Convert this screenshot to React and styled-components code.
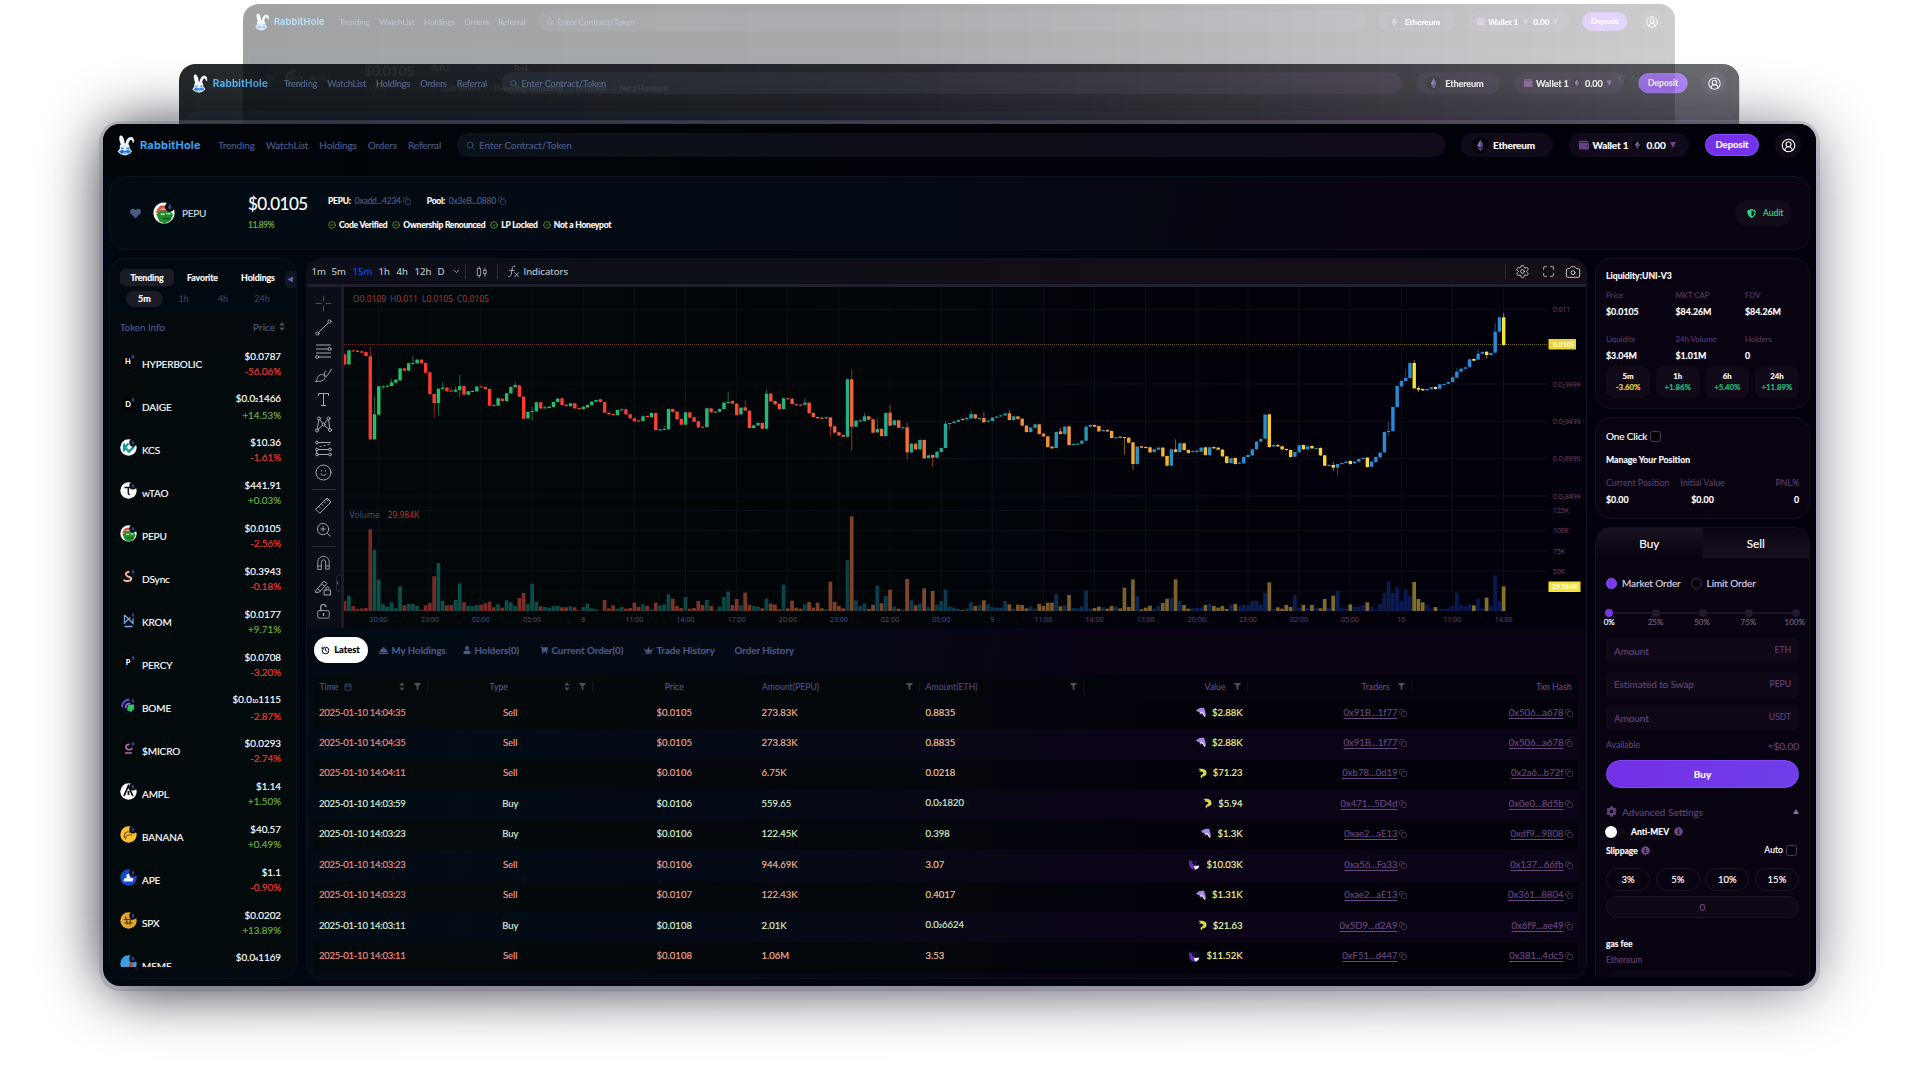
import React from "react";
import styled, { createGlobalStyle, css } from "styled-components";
import { FaHeart, FaFilter, FaCog, FaInfoCircle, FaShieldAlt, FaCrown, FaShoppingCart, FaUser, FaWallet, FaConciergeBell } from "react-icons/fa";
import { Copy, Search, CircleUserRound, CircleCheck, ChevronDown, Calendar, Settings, Maximize, Camera, History } from "lucide-react";

const Global = createGlobalStyle`
  * { box-sizing: border-box; }
  html, body { margin: 0; padding: 0; background: #fff; }
  body {
    height: 1071px;
    overflow: hidden;
    font-family: Lato, "Liberation Sans", sans-serif;
    font-size: 10px;
    line-height: 12px;
    color: #fff;
    -webkit-text-stroke: 0.15px;
  }
  svg { display: block; flex: none; }
`;

const blueInk = "#4a5a88";
const plumInk = "#68467f";

/* ---------- stage and stacked windows ---------- */

const Stage = styled.div`
  position: relative;
  width: 1920px;
  height: 1071px;
  padding: 124px 104px 0 103px;
  overflow: hidden;
`;

const Glow = styled.div`
  position: absolute;
  left: 103px;
  top: 126px;
  width: 1713px;
  height: 864px;
  border-radius: 30px;
  background: linear-gradient(90deg, rgba(8, 5, 22, 0.88), rgba(10, 6, 28, 0.76) 50%, rgba(16, 10, 36, 0.56));
  filter: blur(30px);
`;

const Ghost = styled.div`
  position: absolute;
  left: ${(p) => p.$x}px;
  top: ${(p) => p.$y}px;
  width: 1713px;
  height: ${(p) => p.$h}px;
  overflow: hidden;
  border-radius: 18px 18px 0 0;
  background: linear-gradient(90deg, #00070c, #04000d);
  transform: scale(${(p) => p.$scale});
  transform-origin: 0 0;
  mask-image: linear-gradient(90deg, ${(p) => p.$fade});
`;

const Window = styled.main`
  position: relative;
  display: flex;
  flex-direction: column;
  width: 1713px;
  height: 862px;
  border-radius: 17px;
  overflow: hidden;
  background: linear-gradient(100deg, #00080f 0%, #010510 50%, #03000e 75%);
`;

const Rim = styled.div`
  position: relative;
  width: 1713px;
  height: 862px;
  border-radius: 17px;
  box-shadow: 0 0 0 4px rgba(232, 230, 245, 0.13), 0 1px 0 4px rgba(60, 55, 80, 0.22);
`;

/* ---------- header ---------- */

const HeaderBar = styled.header`
  display: flex;
  align-items: center;
  flex: none;
  height: 52px;
  padding: 0 15px 10px 14px;
  background: linear-gradient(90deg, #000508, #02000a);
`;

const Brand = styled.div`
  display: flex;
  align-items: center;
  width: 101px;
  gap: 5px;
  font: 600 11px/14px Inter, sans-serif;
  letter-spacing: 0.25px;
  color: #3fa9f6;
`;

const Nav = styled.nav`
  display: flex;
  width: 239px;
  gap: 11px;
  color: ${blueInk};
  letter-spacing: -0.15px;
`;

const SearchBox = styled.div`
  display: flex;
  align-items: center;
  gap: 4px;
  width: 988px;
  height: 24px;
  padding-left: 9px;
  border-radius: 12px;
  color: ${blueInk};
  letter-spacing: -0.1px;
  background: linear-gradient(90deg, #0a1118, #0e0e18 50%, #130b1b);
`;

const Pill = styled.div`
  display: flex;
  align-items: center;
  gap: ${(p) => p.$gap}px;
  width: ${(p) => p.$w}px;
  height: 24px;
  margin-left: 16px;
  padding-left: ${(p) => p.$pad}px;
  border-radius: 12px;
  background: #110a1a;
  font-weight: 700;
  letter-spacing: -0.15px;
  white-space: nowrap;
`;

const EthDisc = styled.span`
  display: flex;
  align-items: center;
  justify-content: center;
  width: ${(p) => p.$d}px;
  height: ${(p) => p.$d}px;
  border-radius: 50%;
  background: #020106;
`;

const Caret = styled.span`
  width: 0;
  height: 0;
  border: 3px solid transparent;
  ${(p) => (p.$up ? css`border-bottom: 5px solid #8a6aa5; border-top: 0;` : css`border-top: 6px solid #6b478a; border-bottom: 0;`)}
`;

const Deposit = styled.button`
  width: 54px;
  height: 22px;
  margin-left: 16px;
  padding: 0;
  border: 1px solid #8a4bff;
  border-radius: 11px;
  background: #7433ea;
  color: #fff;
  font: 700 9.5px/12px Lato, sans-serif;
`;

const Avatar = styled.div`
  display: flex;
  align-items: center;
  justify-content: center;
  width: 26px;
  height: 26px;
  margin-left: 16px;
  border-radius: 50%;
  background: #110a1a;
`;

/* ---------- token summary ---------- */

const TokenBar = styled.section`
  display: flex;
  align-items: center;
  flex: none;
  width: 1701px;
  height: 74px;
  margin-left: 6px;
  border: 1px solid #0b141d;
  border-right-color: #180f1f;
  border-radius: 16px;
  background: linear-gradient(100deg, #020b12 0%, #040a14 50%, #060611 65%, #0a0313 75%);
`;

const TokenName = styled.div`
  display: flex;
  align-items: center;
  gap: 7px;
  width: 138px;
  padding-left: 20px;
  color: #d5dae0;
  letter-spacing: -0.3px;
`;

const HeartSlot = styled.span`
  margin-right: 5px;
`;

const Stack = styled.div`
  display: flex;
  flex-direction: column;
  justify-content: space-between;
  width: ${(p) => p.$w};
  height: 36px;
`;

const BigPrice = styled.div`
  font-size: 17px;
  line-height: 18px;
  letter-spacing: -0.5px;
`;

const Up = styled.span`
  font-size: 8.5px;
  letter-spacing: -0.4px;
  color: #74b43c;
`;

const Line = styled.div`
  display: flex;
  align-items: center;
  gap: ${(p) => p.$gap || 0}px;
  font-size: 8.5px;
  font-weight: 700;
  letter-spacing: -0.22px;
  white-space: nowrap;
`;

const Addr = styled.span`
  margin: 0 2px 0 4px;
  font-weight: 400;
  color: ${blueInk};
`;

const Check = styled.span`
  display: flex;
  align-items: center;
  gap: 3px;
`;

const Audit = styled.div`
  display: flex;
  align-items: center;
  gap: 7px;
  width: 57px;
  height: 26px;
  margin: 0 17px 0 auto;
  padding-left: 12px;
  border-radius: 13px;
  background: #120b1a;
  color: #35d98e;
  font-size: 8.5px;
`;

/* ---------- body columns ---------- */

const Body = styled.div`
  display: grid;
  grid-template-columns: 188px 1281px 215px;
  column-gap: 8.5px;
  flex: none;
  height: 728px;
  padding: 8px 6px 7px;
`;

const Panel = styled.section`
  border: 1px solid ${(p) => (p.$plum ? "#17101f" : "#0a131c")};
  border-radius: 16px;
  background: ${(p) => (p.$plum ? "#080211" : "#020a11")};
  overflow: hidden;
`;

const Side = styled(Panel)`
  height: 721px;
  padding: 9px 0 11px;
`;

const SideTabs = styled.div`
  display: flex;
  align-items: center;
  height: 18px;
  padding-left: 10px;
  font-size: 8.8px;
  font-weight: 700;
  letter-spacing: -0.1px;
`;

const SideTab = styled.div`
  width: ${(p) => p.$w}px;
  height: 17px;
  line-height: 17px;
  border-radius: 5px;
  text-align: center;
  background: ${(p) => (p.$on ? "#1a1d25" : "none")};
`;

const Fold = styled.div`
  display: flex;
  align-items: center;
  justify-content: center;
  width: 11px;
  height: 17px;
  margin: 4px 0 0 auto;
  border-radius: 4px 0 0 4px;
  background: #121620;
  color: #4a70b0;
  font-size: 6px;
`;

const Periods = styled.div`
  display: flex;
  padding: 5px 0 0 16px;
  color: #35436b;
  font-size: 9px;
`;

const Period = styled.div`
  width: ${(p) => p.$w}px;
  height: 16px;
  border-radius: 8px;
  line-height: 16px;
  text-align: center;
  ${(p) => p.$on && css`background: #1a1d25; color: #fff; font-weight: 700;`}
`;

const SideHead = styled.div`
  display: flex;
  align-items: center;
  height: 31px;
  margin-top: 4px;
  padding: 0 11px 0 10px;
  color: ${blueInk};
  background: #03090c;
`;

const HeadLabel = styled.span`
  flex: 1;
  letter-spacing: -0.1px;
`;

const List = styled.div`
  height: 625px;
  overflow: hidden;
  background: #030a0c;
`;

const Coin = styled.div`
  display: grid;
  grid-template-columns: 22px 1fr auto;
  align-items: center;
  height: 43px;
  padding: 0 15px 0 10px;
  white-space: nowrap;
`;

const CoinSlot = styled.span`
  padding-bottom: 5px;
`;

const CoinName = styled.span`
  font-size: 10px;
  letter-spacing: -0.1px;
`;

const CoinPrice = styled.div`
  text-align: right;
  font-size: 9.8px;
  line-height: 14.6px;
`;

const Delta = styled.div`
  color: ${(p) => (p.$v.startsWith("+") ? "#73b03d" : "#ee3a35")};
`;

const Sub = styled.span`
  font-size: 5.5px;
`;

/* ---------- centre column ---------- */

const Centre = styled(Panel)`
  height: 721px;
  border-right-color: #17101f;
  background: linear-gradient(97deg, #020b13 0%, #040a14 35%, #090314 60%);
`;

const Toolbar = styled.div`
  display: flex;
  align-items: center;
  height: 25px;
  padding: 0 5px 0 5px;
  font: 500 9.6px/12px "Open Sans", sans-serif;
  color: #c4c6cc;
  background: linear-gradient(90deg, #0c0f18, #0e0f18 40%, #150d17 62%, #150e18);
`;

const Interval = styled.span`
  width: ${(p) => p.$w}px;
  color: ${(p) => (p.$on ? "#1552e0" : "inherit")};
`;

const VRule = styled.span`
  width: 1px;
  height: 15px;
  margin: ${(p) => p.$m};
  background: #2c2c3a;
`;

const ChartRow = styled.div`
  display: flex;
  height: 344px;
  border-top: 3px solid #1f202b;
`;

const Tools = styled.div`
  display: flex;
  flex-direction: column;
  align-items: center;
  flex: none;
  position: relative;
  width: 37px;
  height: 341px;
  padding-top: 4px;
  overflow: hidden;
  border-right: 3px solid #1c1d28;
  background: #0b0e17;
`;

const Tool = styled.div`
  display: flex;
  align-items: center;
  justify-content: center;
  flex: none;
  height: 24.2px;
`;

const HRule = styled.span`
  flex: none;
  width: 24px;
  height: 1px;
  margin: ${(p) => p.$m};
  background: #2b2e3b;
`;

const ToolsFold = styled.div`
  position: absolute;
  right: 0;
  top: 288px;
  width: 5px;
  height: 17px;
  border: 1px solid #232632;
  border-right: 0;
  border-radius: 3px 0 0 3px;
  font-size: 8px;
  line-height: 13px;
  color: #8a8d98;
`;

const Tabs = styled.div`
  display: flex;
  align-items: center;
  height: 46px;
  padding: 0 0 2px 7px;
  font-size: 9.7px;
  font-weight: 700;
  color: ${blueInk};
  white-space: nowrap;
`;

const Tab = styled.div`
  display: flex;
  align-items: center;
  gap: 4px;
  width: ${(p) => p.$w}px;
`;

const ActiveTab = styled.div`
  display: flex;
  align-items: center;
  justify-content: center;
  gap: 4px;
  width: 54px;
  height: 26px;
  margin-right: 11px;
  border-radius: 13px;
  background: #fff;
  color: #05070c;
  font-size: 9.3px;
  font-weight: 900;
`;

const Table = styled.div`
  width: 1264px;
  margin-left: 7px;
`;

const cols = "114.5px 164.5px 163.5px 163.5px 164px 164px 164px 166px";

const HeadRow = styled.div`
  display: grid;
  grid-template-columns: ${cols};
  align-items: center;
  height: 25px;
  border-radius: 7px 7px 0 0;
  background: linear-gradient(90deg, #030a0c, #03060b 50%, #04020c 66%);
  font-size: 8.7px;
`;

const Row = styled.div`
  display: grid;
  grid-template-columns: ${cols};
  align-items: center;
  height: ${(p) => p.$h}px;
  padding-bottom: 3px;
  background: ${(p) =>
    p.$odd ? "linear-gradient(97deg, #030c15, #040a15 35%, #0b0416 62%)" : "linear-gradient(97deg, #030a0c, #03060b 50%, #03020b 66%)"};
`;

const Th = styled.div`
  display: flex;
  align-items: center;
  justify-content: ${(p) => p.$j || "flex-start"};
  height: 12px;
  padding: 0 ${(p) => p.$r || 0}px 0 ${(p) => p.$l || 0}px;
  border-right: ${(p) => (p.$line ? "1px solid rgba(90,90,130,.16)" : "0")};
  color: ${(p) => p.$c};
`;

const ThText = styled.span`
  margin: ${(p) => p.$m || 0};
`;

const Push = styled.span`
  flex: 1;
`;

const SortPair = styled.span`
  display: flex;
  margin-right: 9px;
`;

const Td = styled.div`
  display: flex;
  align-items: center;
  gap: ${(p) => p.$gap || 0}px;
  justify-content: ${(p) => p.$j || "flex-start"};
  padding: 0 ${(p) => p.$r || 0}px 0 ${(p) => p.$l || 0}px;
  color: ${(p) => p.$c};
  font-size: 9.5px;
  letter-spacing: ${(p) => p.$track || 0}px;
  white-space: pre;
`;

const HashLink = styled.span`
  text-decoration: underline;
  text-underline-offset: 2px;
`;

/* ---------- right column ---------- */

const Right = styled.aside`
  display: flex;
  flex-direction: column;
  gap: 8px;
  height: 719px;
  overflow: hidden;
  white-space: nowrap;
`;

const Liquidity = styled(Panel)`
  flex: none;
  height: 151px;
  padding: 11px 10px 0;
  font-size: 9px;
`;

const Bold = styled.div`
  font-weight: 700;
  font-size: ${(p) => p.$s || 8.7}px;
`;

const Stats = styled.div`
  display: grid;
  grid-template-columns: 69.5px 69.5px 1fr;
  row-gap: 15px;
  margin-top: 7px;
`;

const StatLabel = styled.div`
  color: #573a6c;
  font-size: 7.8px;
  line-height: 12px;
`;

const StatValue = styled.div`
  margin-top: 4px;
  font-size: 8.8px;
  line-height: 13px;
  font-weight: 700;
`;

const Quad = styled.div`
  display: grid;
  grid-template-columns: repeat(4, 1fr);
  gap: 5.5px;
  margin-top: ${(p) => p.$mt}px;
`;

const Change = styled.div`
  height: 32px;
  padding-top: 5px;
  border-radius: 8px;
  background: #100918;
  text-align: center;
  font-size: 7.8px;
  font-weight: 700;
  line-height: 11.4px;
`;

const Tint = styled.div`
  color: ${(p) => p.$c};
`;

const Position = styled(Panel)`
  flex: none;
  height: 102px;
  padding: 12px 10px 0;
`;

const ManageTitle = styled(Bold)`
  margin: 12px 0 11px;
`;

const CheckLine = styled.div`
  display: flex;
  align-items: center;
  gap: 3px;
  letter-spacing: -0.15px;
`;

const Box = styled.span`
  width: 11px;
  height: 11px;
  margin-right: ${(p) => p.$mr || 0}px;
  border: 1px solid #4d3859;
  border-radius: 2.5px;
  background: #04010a;
`;

const Trio = styled.div`
  display: flex;
  justify-content: space-between;
  height: 17px;
  font-size: 8.8px;
  font-weight: ${(p) => (p.$bold ? 700 : 400)};
  color: ${(p) => (p.$bold ? "#fff" : "#5b3d72")};
`;

const TrioCell = styled.span`
  width: ${(p) => p.$w}px;
  text-align: ${(p) => p.$a || "left"};
`;

const Trade = styled(Panel)`
  flex: none;
  height: 480px;
`;

const SideSwitch = styled.div`
  display: grid;
  grid-template-columns: 1fr 1fr;
  height: 30px;
  text-align: center;
  font-size: 11.7px;
  line-height: 30px;
`;

const Half = styled.div`
  background: ${(p) => (p.$on ? "linear-gradient(#19121f, #080211)" : "linear-gradient(#0b0413, #19111f)")};
`;

const Form = styled.div`
  padding: 18px 10px 0;
`;

const Radios = styled.div`
  display: flex;
  align-items: center;
  gap: 5px;
  height: 14px;
  font-size: 10px;
  letter-spacing: -0.1px;
  color: #dcd8e2;
`;

const Radio = styled.span`
  width: 11px;
  height: 11px;
  margin-left: ${(p) => p.$ml || 0}px;
  border-radius: 50%;
  border: 1px solid ${(p) => (p.$on ? "#8a55f0" : "#43304f")};
  background: ${(p) => (p.$on ? "#7a38ec" : "#05010b")};
`;

const Track = styled.div`
  display: flex;
  align-items: center;
  justify-content: space-between;
  height: 10px;
  margin: 18px -1px 0 -1px;
  background: linear-gradient(transparent 4px, #1c1424 4px, #1c1424 6px, transparent 6px);
`;

const Stop = styled.span`
  width: 8px;
  height: 8px;
  border-radius: 50%;
  background: ${(p) => (p.$on ? "#7638e0" : "#251830")};
`;

const Ticks = styled.div`
  display: grid;
  grid-template-columns: repeat(5, 46.4px);
  margin: -1px -20px 11px;
  height: 10px;
  line-height: 10px;
  font-size: 8px;
  text-align: center;
  color: #75647f;
`;

const Tick = styled.span`
  color: ${(p) => (p.$on ? "#fff" : "inherit")};
`;

const Field = styled.div`
  display: flex;
  align-items: center;
  justify-content: space-between;
  height: 25px;
  margin-bottom: 8.6px;
  padding: 0 8px;
  border-radius: 4px;
  background: #0f0817;
  color: #61427a;
  letter-spacing: -0.1px;
`;

const Unit = styled.span`
  padding-bottom: 1px;
  font-size: 8.7px;
`;

const Between = styled.div`
  display: flex;
  align-items: center;
  justify-content: space-between;
  height: ${(p) => p.$h}px;
  margin-top: ${(p) => p.$mt || 0}px;
  color: ${(p) => p.$c || "#61427a"};
`;

const BuyButton = styled.button`
  display: block;
  width: 193px;
  height: 28px;
  margin-top: 7px;
  padding: 0;
  border: 1px solid #8448f5;
  border-radius: 14px;
  background: linear-gradient(90deg, #742fe6, #6f3fe9);
  color: #fff;
  font: 700 10px/12px Lato, sans-serif;
`;

const Inline = styled.div`
  display: flex;
  align-items: center;
  gap: ${(p) => p.$gap}px;
`;

const Toggle = styled.span`
  display: flex;
  align-items: center;
  width: 20px;
  height: 8px;
  margin: 0 1px 0 -1px;
  border-radius: 4px;
  background: #100a17;
`;

const Knob = styled.span`
  width: 12px;
  height: 12px;
  flex: none;
  border-radius: 50%;
  background: #fff;
`;

const Slip = styled.div`
  height: 23px;
  border: 1px solid #1d1426;
  border-radius: 12px;
  line-height: 21px;
  text-align: center;
  font-size: 9.5px;
`;

const SlipInput = styled.div`
  height: 22px;
  margin: 5px 0 20px;
  border: 1px solid #1d1426;
  border-radius: 11px;
  background: #0f0817;
  line-height: 20px;
  text-align: center;
  color: #6a4a80;
`;

const Network = styled.div`
  height: 24px;
  margin-top: 5px;
  border-radius: 12px;
  background: #0e0716;
`;

const SmallNote = styled.div`
  margin-top: 4px;
  font-size: 8.5px;
  color: #61427a;
`;

/* ---------- drawings ---------- */

const Rabbit = () => (
  <svg width="18" height="21" viewBox="0 0 18 21">
    <path d="M4.2 10C2 6 1.6 1 3.6.6 5.800 0 7.400 4.500 7.800 9Z" fill="#fff" />
    <path d="M8.600 9C9 5 11 2 14 2c2 0 3.200 1.600 3 5.400l-1.300.2c-.4-2-.9-3-1.900-2.700-1.400.4-2 2.500-2.700 5Z" fill="#f2f8ff" />
    <path d="M3.500 9.500c2-1.600 6-1.600 8.300 0 1 1.600 1 2.800.8 4l2.400 3-2.800 2.600L8 20.600l-4.500-1.400L.6 16.600l2.300-2.800c-.4-1.500-.1-3 .6-4.300Z" fill="#e6f3ff" />
    <path d="m2 16.500 3-2 3 1.500 3-1.500 3 2-2.500 2L8 17.200 4.500 19Z" fill="#2276dd" />
    <path d="M4 12.500h2.600v1.500H4zM9.300 12.500H12v1.500H9.300z" fill="#2f8ff0" />
    <path d="m6 18.400 2 1.400 2-1.400-2-.8Z" fill="#49b5ff" />
  </svg>
);

const Eth = ({ s = 10 }) => (
  <svg width={s * 0.62} height={s} viewBox="0 0 10 16">
    <path d="M5 0 0 8.300 5 11l5-2.700Z" fill="#8a70b4" />
    <path d="M5 0v11l5-2.700Z" fill="#513c77" />
    <path d="m0 9.500 5 6.500 5-6.500-5 2.800Z" fill="#6b5296" />
  </svg>
);

const SortIcon = ({ c = "#4b4d55" }) => (
  <svg width="6" height="9" viewBox="0 0 6 9">
    <path d="M3 .3 5.700 3.500H.3ZM3 8.700.3 5.500h5.400Z" fill={c} />
  </svg>
);

const coinArt = {
  HYPERBOLIC: { bg: "#000", letter: "H" },
  DAIGE: { bg: "#000", letter: "D" },
  PERCY: { bg: "#060606", letter: "P" },
  KCS: { bg: "#fff", art: <path d="M4 4.500v8M5 8.500l3.500-4M5 8.500l4 4 4.500-4.500-2-2" stroke="#159a86" strokeWidth="2.300" fill="none" /> },
  wTAO: { bg: "#fff", art: <path d="M4.500 5.500h7.500M8.300 5.500v5.500q0 1.800 1.700 1.500" stroke="#111" strokeWidth="1.500" fill="none" /> },
  PEPU: {
    bg: "#f4f4f4",
    art: (
      <g>
        <path d="M2.500 8.500C3 4 6 2 9.500 3l4.500 4.500-5 1Z" fill="#c9573d" />
        <path d="M2.500 9.500 6.500 6.500l7 .5 2 3-2 4.500-4.500 2.200-4-1.700Z" fill="#1d8f2d" />
        <path d="M6 9.300h3M10.500 9h3" stroke="#eaf6e8" strokeWidth="1" />
        <path d="M7.500 12.800h5.500" stroke="#0f5a1c" strokeWidth="1.200" />
        <path d="M6 5.500h4" stroke="#f0e0c8" strokeWidth=".7" />
      </g>
    ),
  },
  DSync: { bg: "#140b0b", art: <path d="M12.500 4.500C8 2.500 4.500 5 6.500 7.500s6 1 4.500 4c-1 2-5 2-7.500.5" stroke="#d8bfb4" strokeWidth="2" fill="none" /> },
  KROM: { bg: "#05090f", art: <path d="M4.500 4v8l8.500-8v8.500L4.500 4M4.500 15.500h8" stroke="#7fa9de" strokeWidth="1.300" fill="none" /> },
  BOME: {
    bg: "#0a1018",
    art: (
      <g fill="none" strokeWidth="1.800">
        <path d="M2 10C2.500 4 7 2 11 3" stroke="#5b55e6" />
        <path d="M5.500 11c0-4 3-5 6-4.500" stroke="#a565e0" />
        <path d="M8 8l6-1v5l-3 3-4-2Z" fill="#2fc466" stroke="none" />
      </g>
    ),
  },
  $MICRO: { bg: "#020205", art: <path d="M11.500 5.500C7 2 3.500 8 8 9.500c2.500.8 4-.5 4-2M5 13h7" stroke="#b86fb0" strokeWidth="1.700" fill="none" /> },
  AMPL: { bg: "#fff", art: <path d="M4 13 8.300 3l4.500 10M8.500 8v4" stroke="#0b0b0b" strokeWidth="1.800" fill="none" /> },
  BANANA: { bg: "#f7c02c", art: <path d="M4.500 12C3.500 7 7 4.500 10.500 6.500M5.500 13.500c0-4 2.500-5.500 6.500-4.500" stroke="#7b4a12" strokeWidth="1.100" fill="none" /> },
  APE: { bg: "#1449c9", art: <path d="M3.500 12.500h9l1-3-3.500-1L9 4.500 6 6l1 2.500-3 1Z" fill="#eef3ff" /> },
  SPX: { bg: "#e3a32c", art: <path d="M4 7.500h9M4.500 11h8M5.500 4.500l2 8M11 6l-1.500 7" stroke="#5c3c0c" strokeWidth="1.200" fill="none" /> },
  MEME: { bg: "#3e9fe0", art: <path d="M8 3.500c4 4-1 6 1.500 12H12c0-5 3-6-4-12Z" fill="#b9472d" /> },
};

const CoinIcon = ({ name, size = 17 }) => {
  const a = coinArt[name];
  return (
    <svg width={size} height={size} viewBox="0 0 17 17">
      <circle cx="8.500" cy="8.500" r="8.200" fill={a.bg} stroke={a.letter ? "#15171c" : "none"} strokeWidth=".6" />
      {a.art}
      {a.letter && (
        <text x="8" y="11.200" textAnchor="middle" fontSize="7.500" fontWeight="900" fontFamily="Lato, sans-serif" fill="#fff">
          {a.letter}
        </text>
      )}
      <circle cx="13" cy="3.800" r="3.700" fill="#05080e" />
      <path d="M13 .9 11.400 3.900 13 6.600l1.600-2.700Z" fill="#343f70" />
    </svg>
  );
};

const Sparkfish = ({ kind }) => {
  if (kind === "whale")
    return (
      <svg width="12" height="13" viewBox="0 0 14 13">
        <path d="M1 .5 3.500 3 5 1v4l3 2.500h5.500c0 3-2 5-5.500 5S1.500 10 1.500 7C1.500 5 1 3 1 .5Z" fill="#5e2fae" />
        <path d="M6.500 8.500 13 8c-.5 2.500-2 4-4.500 4.200Z" fill="#f3ecff" />
        <path d="M7 3.500h1M9.500 2l1-1M9 4h1" stroke="#7b4fc9" />
      </svg>
    );
  if (kind === "dolphin")
    return (
      <svg width="11" height="11" viewBox="0 0 11 11">
        <path d="M1 4C3 1 6 .2 9.500 1L9.300 2.500c1.400 2 1.700 4.500 1.200 8-.6-2.500-1.500-4-3.500-4.800L5 8l-.5-2.800Z" fill="#a887ea" />
        <path d="M5.500 5.200c2 .5 3.400 1.500 4.200 4.300" stroke="#fff" strokeWidth="1.100" fill="none" />
      </svg>
    );
  return (
    <svg width="9" height="11" viewBox="0 0 9 11">
      <path d="M.5 1C4 .2 8.500 1 8.500 5 8.500 8 6 8.300 4.500 8.500L3 10.500 2.500 8 4 6.500c1.500-.3 1.700-1.500.8-2.200C3.500 3.500 2 4 .8 3.300L2.500 2.500Z" fill="#d8dc3e" />
    </svg>
  );
};

const ink = { stroke: "#a6a8b0", strokeWidth: 1, fill: "none", strokeLinecap: "round", strokeLinejoin: "round" };
const Glyph = ({ children, size = 17, ...rest }) => (
  <svg width={size} height={size} viewBox="0 0 17 17" {...ink} {...rest}>
    {children}
  </svg>
);

const toolGlyphs = {
  cross: <Glyph stroke="#1c4fc0"><path d="M8.500 1v5M8.500 11v5M1 8.500h5M11 8.500h5" /></Glyph>,
  trend: <Glyph><circle cx="2.500" cy="14.500" r="1.600" /><circle cx="14.500" cy="2.500" r="1.600" /><path d="m3.700 13.300 9.600-9.600" /></Glyph>,
  fib: <Glyph><path d="M1.500 2h14M1.500 6h11.500M1.500 10h14M4 14h11.500" /><circle cx="14.500" cy="6" r="1.500" /><circle cx="2.200" cy="14" r="1.500" /></Glyph>,
  brush: <Glyph><path d="M1 14.500c1.500-2 1.500-7 5.500-7 3 0 4 2.500 3 4.500s-5 2.500-8.500 2.500ZM9.500 8.500 11 9.500c2.500-1 3-4.500 5.500-7.500M9.500 8c0-2 0-2.500 1-4" /></Glyph>,
  text: <Glyph><path d="M3.500 4.500V2.500h10v2M8.500 2.500v12M6.500 14.500h4" /></Glyph>,
  pattern: <Glyph><circle cx="4" cy="2.500" r="1.500" /><circle cx="13.500" cy="2.500" r="1.500" /><circle cx="2" cy="14.500" r="1.500" /><circle cx="15" cy="14" r="1.500" /><circle cx="8.500" cy="8.500" r="1.500" /><path d="M3.800 4 2.300 13M5 3.700l2.500 3.600M12.500 3.700 9.500 7.300M13.700 4l1 8.500M7.500 9.500l-4.500 4M9.500 9.500l4.500 3.800" /></Glyph>,
  range: <Glyph><path d="M3.500 2.500h12M3.500 9.500h10M3 14.500h10M1.500 10.500v2" /><circle cx="2" cy="2.500" r="1.400" /><circle cx="2" cy="9.500" r="1.400" /><circle cx="2" cy="14.500" r="1.400" /><circle cx="15" cy="9.500" r="1.400" /><circle cx="15" cy="14.500" r="1.400" /><path d="M5 6.500h1M9 5.500h1M13 4.500h1" /></Glyph>,
  smile: <Glyph><circle cx="8.500" cy="8.500" r="7.500" /><path d="M5.800 10c1.300 2 4.100 2 5.400 0M6.500 6.500v.6M10.500 6.500v.6" /></Glyph>,
  ruler: <Glyph><path d="M1 12 12 1l4 4L5 16ZM4 9.500l1.500 1.500M6.500 7l1.500 1.500M9 4.500 10.500 6M11.500 2.500 13 4" /></Glyph>,
  zoom: <Glyph size={16}><circle cx="7.500" cy="7.500" r="6" /><path d="m12 12 3 3M7.500 5v5M5 7.500h5" /></Glyph>,
  magnet: <Glyph size={15}><path d="M2 16V8a6.500 6.500 0 0 1 13 0v8h-4V8a2.500 2.500 0 0 0-5 0v8ZM2 12.500h4M11 12.500h4" /></Glyph>,
  pencil: <Glyph><path d="M1 11.500 9 2l3 2.500-7.500 8.500L1 13.500ZM3 10l2.500 2M7 5l3 2.500M9.500 11h6v5h-6ZM11 11V9.500a1.500 1.500 0 0 1 3 0" /></Glyph>,
  lock: <Glyph size={15}><rect x="2" y="7.500" width="13" height="8.500" rx="1.500" /><path d="M5.500 7.500V4a3 3 0 0 1 6-1M8.500 10.500v2.500" strokeWidth="1.400" /></Glyph>,
};

const CandleGlyph = () => (
  <Glyph size={12}>
    <path d="M2.500 3.500h4v10h-4ZM4.500 1v2.500M4.500 13.500V16M11 6h3.500v5H11ZM12.700 3v3M12.700 11v3.500" strokeWidth="1.300" />
  </Glyph>
);

/* direction, body top, body bottom, volume top, wick top, wick bottom - in thirds of a pixel */
const candleData = `
r298,328,1038 g286,328,1022 r286,288,1053,283,291 r287,291,1062 r289,293,1060 r291,303,1059 r304,553,823,276 g478,553,884,425
g394,479,974 g394,396,1048,392,404 g392,394,1055,391,396 g382,393,1042,372 g374,383,1060 g340,376,994 r340,347,1051 g325,347,1047
g324,327,1047,303 g314,325,1053 r314,325,1064 r324,353,1051 r352,417,1044 r417,444,964,417,490 g401,444,924,401,481 g398,402,1038,380
r398,409,1051 r407,409,1050,397 g404,410,1035,395 g393,405,985,360,426 r393,419,1042 g409,419,1053 g408,410,1053 g395,409,1050
r394,396,1049 r396,402,1045 r402,452,1040 r450,453,1057 g430,452,1048 r431,438,1058 g415,438,1036 g396,415,1042
g390,396,1053,380 r391,425,1029 r425,491,1014 g471,490,1048 g468,471,986,455,497 g442,469,1040 r442,460,1054 g457,459,1056,452
g455,459,1058 g441,456,1053 g431,441,1053 r430,450,1057 r449,453,1057 g445,453,1054 r445,460,1057 r459,462,1066
g455,462,1056 g450,457,1046 g440,450,1060 g435,440,1063 r433,441,1067 r441,473,1035 r473,478,1060 r477,480,1051
g465,480,1061 g463,466,1056 r463,478,1061 r478,490,1059 r490,499,1043 r497,499,1056 g484,498,1048 r483,485,1053
g474,486,1063 r474,525,1043 g523,525,1051 g522,524,1048,512 g462,523,1018 r462,471,1031 r470,493,1053 r492,509,1059
g472,509,1026 r472,488,1061 r487,500,1059 r499,517,1038 r515,518,1050 g460,516,1035 r460,472,1053 g470,472,1066
g462,470,1055 g443,462,1026 g441,443,1010,410 r438,446,1050 r446,480,1032 g458,478,1051 r457,467,1013,436 r467,519,1050
g511,519,1053 g504,511,1055 r504,521,1060 g416,521,1031,405 r416,439,1046 r438,448,1049 r447,462,1063 g430,462,989
r430,432,1060 r431,447,1037 r448,451,1058 r449,451,1061 g443,449,1048,430 r443,474,1041 r474,486,1058 r486,490,1043
r488,491,1060 g487,490,1063 r487,515,980,487,545 r514,533,1041 r532,541,1053 r540,545,1060 g373,545,915 r373,515,784,344,586
g497,515,1036 g496,499,1053 g484,498,1045,473 r484,494,1062 r493,533,1050 g522,532,992,490 r522,543,1045 g474,543,1023
r473,512,1004,450 g496,510,1055 r496,518,1061 g517,519,1064 r517,592,972,503,613 g566,592,1036 r566,583,1051 g555,583,1046
r555,610,1000 g601,609,1057 r600,608,1008,600,635 g590,608,1049 g579,591,1038 g506,579,1004,497 g504,507,1055,504,524 g500,504,1058
g495,500,1062 r492,495,1065 g489,493,1061 g477,490,1042,466 r478,490,1053 g489,491,1050 r489,502,1036,471 g497,500,1048
g488,498,1056 g485,487,1058 g481,484,1058 g476,481,1038 r475,495,1048,465 g484,495,1061 r484,492,1049 r491,512,1050
r512,531,1060 g518,531,1055 g508,518,1061 r508,537,1047 r536,544,1053 r544,576,1043 r575,580,1043 g531,579,1018
r529,537,1054,518 g515,537,1051 r514,570,1020 g567,569,1060 g566,568,1060 g557,566,1055 g515,557,1006 g510,515,1061
r510,515,1059 r513,529,1055 g525,528,1057 r525,529,1061 r528,549,1053 g547,549,1055 r545,548,1060 r546,548,998,546,599
r548,563,1056 r562,627,973,562,645 g575,627,1024 r574,578,1063 r576,579,1058 r577,592,1052 g583,591,1061 g578,584,1053
r578,604,1044 r603,632,1031 g583,632,1029 r583,591,973,553 g565,591,1038 r565,585,1050 r585,594,1061 g588,591,1060
g587,591,1059 g578,590,1058 r577,600,1050 g577,600,1047 r576,580,1053 r578,584,1058 r584,604,1053 r604,624,1062
g610,624,1050 r609,627,1047 g623,625,1054 g606,625,1050 g600,606,1050 g583,601,1038 g560,583,1038 g552,560,1048
g479,551,1014 r478,576,982 g570,574,1062 r570,574,1057 r574,583,1061 r582,585,1050 r585,606,1056 g591,605,1020
g571,592,1058 r570,583,1050 g574,583,1059 r573,580,1050 g579,581,1058 r579,601,1060 r601,632,1032 g630,632,1058
r630,638,1022,620,648 g627,638,1008,627,662 g624,627,1058 g620,624,1061 r618,627,1048 g620,625,1055 g612,620,1055 g609,612,1050
r608,636,1042 g620,635,1056 g606,621,1064 g593,607,1047 g531,592,1014 g528,531,980,500,543 g456,528,1014 g393,456,996
g378,394,1038 g369,378,1004,343 g324,369,1024 r324,400,981,316 r399,404,1032,393,411 r402,406,1042 g402,406,1050 g397,402,1061
r396,402,1056 g388,401,1062 g387,389,1062 g381,386,1058 g367,381,1053 g350,368,1014,340 g341,350,1049 g337,341,1054
g313,336,1048 r312,317,1051 g296,314,1031,282 g291,296,1058 r290,300,1028,290,310 g294,300,1052 g230,293,961,204 g187,230,1038 r187,270,994,174`;

const candles = candleData
  .trim()
  .split(/\s+/)
  .map((t, i) => {
    const n = t.slice(1).split(",").map(Number);
    const y = (v) => v / 3 - 32;
    return {
      x: 0.7 + i * 4.261,
      up: t[0] === "g",
      top: y(n[0]),
      bottom: Math.max(y(n[1]), y(n[0]) + 1),
      vol: y(n[2]),
      hi: y(n[3] || n[0] - 2),
      lo: y(n[4] || n[1] + 2),
    };
  });

const times = ["20:00", "23:00", "02:00", "05:00", "8", "11:00", "14:00", "17:00", "20:00", "23:00", "02:00", "05:00", "9", "11:00", "14:00", "17:00", "20:00", "23:00", "02:00", "05:00", "10", "11:00", "14:00"];
const levels = [[22.3, "0.011"], [59.7, ""], [97, "0.0₂9999"], [134.3, "0.0₂9499"], [171.7, "0.0₂8999"], [209, "0.0₂8499"], [223.7, "125K"], [243.7, "100K"], [264, "75K"], [284, "50K"], [304, ""]];

const Ramp = ({ id, stops }) => (
  <linearGradient id={id} gradientUnits="userSpaceOnUse" x1="0" y1="0" x2="1204" y2="0">
    {stops.map(([o, c]) => (
      <stop key={o} offset={o} stopColor={c} />
    ))}
  </linearGradient>
);

const Chart = () => (
  <svg width="1242" height="341" viewBox="0 0 1242 341" fontFamily='"Open Sans", sans-serif'>
    <defs>
      <Ramp id="bg" stops={[[0, "#01070a"], [0.5, "#010508"], [0.75, "#02010a"], [1, "#02000b"]]} />
      <Ramp id="up" stops={[[0, "#25c065"], [0.32, "#25b973"], [0.48, "#24ab90"], [0.62, "#2795b8"], [0.8, "#2a8bd0"], [1, "#2a8adb"]]} />
      <Ramp id="down" stops={[[0, "#fb372f"], [0.3, "#fb4033"], [0.45, "#f6683a"], [0.6, "#f29639"], [0.72, "#f8bd33"], [0.85, "#fbdd35"], [1, "#fce93c"]]} />
      <Ramp id="vup" stops={[[0, "#0d5149"], [0.35, "#0c4645"], [0.5, "#0d3b50"], [0.62, "#0e2d52"], [0.75, "#0b1f54"], [1, "#0a1650"]]} />
      <Ramp id="vdown" stops={[[0, "#752826"], [0.3, "#7d3428"], [0.5, "#7f4a2a"], [0.62, "#7b5e28"], [0.8, "#7e6a26"], [1, "#85742a"]]} />
      <Ramp id="ref" stops={[[0, "#8b3a2c"], [0.5, "#85602f"], [1, "#9a8a30"]]} />
      <Ramp id="labels" stops={[[0, "#4d5a84"], [0.45, "#565084"], [0.6, "#63477f"], [1, "#664878"]]} />
    </defs>
    <rect width="1242" height="341" fill="url(#bg)" />
    {times.map((_, i) => (
      <path key={i} d={`M${34.7 + i * 51.13} 0V324`} stroke="#0c1019" strokeWidth="1" />
    ))}
    {levels.map(([y]) => (
      <path key={y} d={`M0 ${y}H1204`} stroke="#0c1019" strokeWidth="1" />
    ))}
    <path d="M0 57.500L1204 57.501" stroke="url(#ref)" strokeDasharray="1 1" opacity=".75" />
    {candles.map((c, i) => (
      <g key={i}>
        <rect x={c.x - 1.9} y={c.vol} width="3.700" height={324 - c.vol} fill={c.up ? "url(#vup)" : "url(#vdown)"} />
        <rect x={c.x - 0.5} y={c.hi} width="1" height={c.lo - c.hi} fill={c.up ? "url(#up)" : "url(#down)"} opacity=".55" />
        <rect x={c.x - 1.7} y={c.top} width="3.400" height={c.bottom - c.top} fill={c.up ? "url(#up)" : "url(#down)"} />
      </g>
    ))}
    <g fontSize="7" fill="url(#labels)" textAnchor="middle">
      {times.map((t, i) => (
        <text key={i} x={34.7 + i * 51.13} y="335.300">{t}</text>
      ))}
    </g>
    <g fontSize="6.800" fill="#6b4880">
      {levels.map(([y, t]) => t && <text key={y} x="1209" y={y + 2.6}>{t}</text>)}
    </g>
    <rect x="1204.500" y="52" width="27.500" height="10.500" fill="#e8d53c" />
    <rect x="1204.500" y="294.500" width="32" height="10.500" fill="#f5e437" />
    <g fontSize="6.800" fontWeight="700" fill="#fffbd0">
      <text x="1209" y="59.900">0.0105</text>
      <text x="1208" y="302.400">29.984K</text>
    </g>
    <g fontSize="8.500" fill="#4b587a">
      {[["O", "0.0109", 9], ["H", "0.011", 46], ["L", "0.0105", 78], ["C", "0.0105", 113]].map(([k, v, x]) => (
        <text key={k} x={x} y="14.500">{k}<tspan fill="#b83a35">{v}</tspan></text>
      ))}
      <text x="5.500" y="230.500">Volume</text>
      <text x="43.500" y="230.500" fill="#c63832">29.984K</text>
    </g>
  </svg>
);

/* ---------- composed sections ---------- */

const Header = () => (
  <HeaderBar>
    <Brand><Rabbit />RabbitHole</Brand>
    <Nav>
      <span>Trending</span><span>WatchList</span><span>Holdings</span><span>Orders</span><span>Referral</span>
    </Nav>
    <SearchBox><Search size={9} />Enter Contract/Token</SearchBox>
    <Pill $w={91.5} $pad={11} $gap={5}><EthDisc $d={16}><Eth s={11} /></EthDisc>Ethereum</Pill>
    <Pill $w={120.5} $pad={10} $gap={4}>
      <FaWallet size={10} color="#65427e" />Wallet 1<EthDisc $d={10}><Eth s={8} /></EthDisc>0.00<Caret />
    </Pill>
    <Deposit>Deposit</Deposit>
    <Avatar><CircleUserRound size={15} strokeWidth={1.8} /></Avatar>
  </HeaderBar>
);

const Summary = () => (
  <TokenBar>
    <TokenName><HeartSlot><FaHeart size={11} color={blueInk} /></HeartSlot><CoinIcon name="PEPU" size={22} />PEPU</TokenName>
    <Stack $w="80px"><BigPrice>$0.0105</BigPrice><Up>11.89%</Up></Stack>
    <Stack $w="300px">
      <Line>
        PEPU:<Addr>0xadd...4234</Addr><Copy size={8} color={blueInk} />
        <ThText $m="0 0 0 16px">Pool:</ThText><Addr>0x3eB...0880</Addr><Copy size={8} color={blueInk} />
      </Line>
      <Line $gap={5}>
        {["Code Verified", "Ownership Renounced", "LP Locked", "Not a Honeypot"].map((t) => (
          <Check key={t}><CircleCheck size={8} color="#7fb93c" />{t}</Check>
        ))}
      </Line>
    </Stack>
    <Audit><FaShieldAlt size={9} />Audit</Audit>
  </TokenBar>
);

const tokens = [
  ["HYPERBOLIC", "$0.0787", "-56.06%"],
  ["DAIGE", ["$0.0", "2", "1466"], "+14.53%"],
  ["KCS", "$10.36", "-1.61%"],
  ["wTAO", "$441.91", "+0.03%"],
  ["PEPU", "$0.0105", "-2.56%"],
  ["DSync", "$0.3943", "-0.18%"],
  ["KROM", "$0.0177", "+9.71%"],
  ["PERCY", "$0.0708", "-3.20%"],
  ["BOME", ["$0.0", "10", "1115"], "-2.87%"],
  ["$MICRO", "$0.0293", "-2.74%"],
  ["AMPL", "$1.14", "+1.50%"],
  ["BANANA", "$40.57", "+0.49%"],
  ["APE", "$1.1", "-0.90%"],
  ["SPX", "$0.0202", "+13.89%"],
  ["MEME", ["$0.0", "4", "1169"], ""],
];

const Amount = ({ v }) => (Array.isArray(v) ? <span>{v[0]}<Sub>{v[1]}</Sub>{v[2]}</span> : <span>{v}</span>);

const Sidebar = () => (
  <Side>
    <SideTabs>
      <SideTab $w={54} $on>Trending</SideTab><SideTab $w={57}>Favorite</SideTab><SideTab $w={54}>Holdings</SideTab>
      <Fold>◀</Fold>
    </SideTabs>
    <Periods>
      <Period $w={37} $on>5m</Period><Period $w={41}>1h</Period><Period $w={38}>4h</Period><Period $w={40}>24h</Period>
    </Periods>
    <SideHead><HeadLabel>Token Info</HeadLabel><ThText $m="0 4px 0 0">Price</ThText><SortIcon c="#55565c" /></SideHead>
    <List>
      {tokens.map(([name, price, change]) => (
        <Coin key={name}>
          <CoinSlot><CoinIcon name={name} /></CoinSlot>
          <CoinName>{name}</CoinName>
          <CoinPrice><Amount v={price} /><Delta $v={change}>{change || "\u00a0"}</Delta></CoinPrice>
        </Coin>
      ))}
    </List>
  </Side>
);

const trades = [
  ["2025-01-10 14:04:35", "Sell", "$0.0105", "273.83K", "0.8835", "dolphin", "$2.88K", "0x91B...1f77", "0x506...a678"],
  ["2025-01-10 14:04:35", "Sell", "$0.0105", "273.83K", "0.8835", "dolphin", "$2.88K", "0x91B...1f77", "0x506...a678"],
  ["2025-01-10 14:04:11", "Sell", "$0.0106", "6.75K", "0.0218", "shrimp", "$71.23", "0xb78...0d19", "0x2a6...b72f"],
  ["2025-01-10 14:03:59", "Buy", "$0.0106", "559.65", ["0.0", "2", "1820"], "shrimp", "$5.94", "0x471...5D4d", "0x0e0...8d5b"],
  ["2025-01-10 14:03:23", "Buy", "$0.0106", "122.45K", "0.398", "dolphin", "$1.3K", "0xae2...aE13", "0xdf9...9808"],
  ["2025-01-10 14:03:23", "Sell", "$0.0106", "944.69K", "3.07", "whale", "$10.03K", "0xa56...Fa33", "0x137...66fb"],
  ["2025-01-10 14:03:23", "Sell", "$0.0107", "122.43K", "0.4017", "dolphin", "$1.31K", "0xae2...aE13", "0x361...8804"],
  ["2025-01-10 14:03:11", "Buy", "$0.0108", "2.01K", ["0.0", "2", "6624"], "shrimp", "$21.63", "0x5D9...d2A9", "0x6f9...ae49"],
  ["2025-01-10 14:03:11", "Sell", "$0.0108", "1.06M", "3.53", "whale", "$11.52K", "0xF51...d447", "0x381...4dc5"],
];

const sellTones = ["#f58a7c", "#f59788", "#f5a18c", "#f6b18c", "#f4c690", "#f6f082"];
const buyTones = ["#dcedd6", "#dcefd7", "#def0d6", "#d9f1cc", "#d2eecb", "#e8f6b0"];
const Funnel = () => <FaFilter size={7} color="#505058" />;

const Trades = () => (
  <Table>
    <HeadRow>
      <Th $l={6} $r={6} $line $c={blueInk}>Time<ThText $m="0 0 0 6px"><Calendar size={8} /></ThText><Push /><SortPair><SortIcon /></SortPair><Funnel /></Th>
      <Th $r={6} $line $c={blueInk}><Push /><ThText $m="0 0 0 6px">Type</ThText><Push /><SortPair><SortIcon /></SortPair><Funnel /></Th>
      <Th $j="center" $c={blueInk}>Price</Th>
      <Th $l={6} $r={6} $line $c="#4b4d86">Amount(PEPU)<Push /><Funnel /></Th>
      <Th $l={6} $r={6} $line $c="#564484">Amount(ETH)<Push /><Funnel /></Th>
      <Th $j="flex-end" $r={6} $line $c={plumInk}><ThText $m="0 8px 0 0">Value</ThText><Funnel /></Th>
      <Th $j="flex-end" $r={6} $line $c={plumInk}><ThText $m="0 8px 0 0">Traders</ThText><Funnel /></Th>
      <Th $j="flex-end" $r={6} $c={plumInk}>Txn Hash</Th>
    </HeadRow>
    {trades.map((t, i) => {
      const tone = t[1] === "Sell" ? sellTones : buyTones;
      return (
        <Row key={i} $odd={i % 2 === 1} $h={t[5] === "whale" ? 31.2 : 30.3}>
          <Td $l={5.5} $track={-0.25} $c={tone[0]}>{t[0]}</Td>
          <Td $j="center" $c={tone[1]}>{t[1]}</Td>
          <Td $j="center" $c={tone[2]}>{t[2]}</Td>
          <Td $l={5.5} $c={tone[3]}>{t[3]}</Td>
          <Td $l={6} $c={tone[4]}><Amount v={t[4]} /></Td>
          <Td $j="flex-end" $r={5} $gap={6} $c={tone[5]}><Sparkfish kind={t[5]} />{t[6]}</Td>
          <Td $j="flex-end" $r={5} $gap={1} $c={plumInk}><HashLink>{t[7]}</HashLink><Copy size={8} color="#604a6b" /></Td>
          <Td $j="flex-end" $r={5} $gap={1} $c={plumInk}><HashLink>{t[8]}</HashLink><Copy size={8} color="#604a6b" /></Td>
        </Row>
      );
    })}
  </Table>
);

const intervals = [["1m", 20], ["5m", 21], ["15m", 26], ["1h", 18], ["4h", 18], ["12h", 23], ["D", 14]];

const Market = () => (
  <Centre>
    <Toolbar>
      {intervals.map(([t, w]) => <Interval key={t} $w={w} $on={t === "15m"}>{t}</Interval>)}
      <ChevronDown size={9} />
      <VRule $m="0 10px 0 4px" /><CandleGlyph /><VRule $m="0 9px 0 9px" />
      <Glyph size={13}><path d="M2 15c2 .5 3-.5 3.500-3L7 4.500C7.500 2 8.500 1 10.500 1.800M3.500 7h6M10 10l5 5.500M15 10l-5 5.500" strokeWidth="1.300" /></Glyph>
      <ThText $m="0 0 0 4px">Indicators</ThText>
      <Push />
      <VRule $m="0 9px 0 0" /><Settings size={15} strokeWidth={1.500} /><ThText $m="0 10px 0 12px"><Maximize size={13} strokeWidth={1.700} /></ThText><Camera size={16} strokeWidth={1.500} />
    </Toolbar>
    <ChartRow>
      <Tools>
        {["cross", "trend", "fib", "brush", "text", "pattern", "range", "smile"].map((k) => <Tool key={k}>{toolGlyphs[k]}</Tool>)}
        <HRule $m="4px 0 4px" />
        {["ruler", "zoom"].map((k) => <Tool key={k}>{toolGlyphs[k]}</Tool>)}
        <HRule $m="4px 0 4px" />
        {["magnet", "pencil", "lock"].map((k) => <Tool key={k}>{toolGlyphs[k]}</Tool>)}
        <ToolsFold>‹</ToolsFold>
      </Tools>
      <Chart />
    </ChartRow>
    <Tabs>
      <ActiveTab><History size={9} strokeWidth={2.600} />Latest</ActiveTab>
      <Tab $w={84}><FaConciergeBell size={9} />My Holdings</Tab>
      <Tab $w={77}><FaUser size={8} />Holders(0)</Tab>
      <Tab $w={104}><FaShoppingCart size={8} />Current Order(0)</Tab>
      <Tab $w={91}><FaCrown size={9} />Trade History</Tab>
      <Tab $w={70}>Order History</Tab>
    </Tabs>
    <Trades />
  </Centre>
);

const stats = [["Price", "$0.0105"], ["MKT CAP", "$84.26M"], ["FDV", "$84.26M"], ["Liquidity", "$3.04M"], ["24h Volume", "$1.01M"], ["Holders", "0"]];
const changes = [["5m", "-3.60%", "#e6dc3b"], ["1h", "+1.86%", "#21c081"], ["6h", "+5.40%", "#21c081"], ["24h", "+11.89%", "#21c081"]];

const Ticket = () => (
  <Right>
    <Liquidity $plum>
      <Bold>Liquidity:UNI-V3</Bold>
      <Stats>
        {stats.map(([l, v]) => <div key={l}><StatLabel>{l}</StatLabel><StatValue>{v}</StatValue></div>)}
      </Stats>
      <Quad $mt={4}>
        {changes.map(([t, v, c]) => <Change key={t}>{t}<Tint $c={c}>{v}</Tint></Change>)}
      </Quad>
    </Liquidity>
    <Position $plum>
      <CheckLine>One Click<Box /></CheckLine>
      <ManageTitle>Manage Your Position</ManageTitle>
      <Trio><TrioCell $w={66}>Current Position</TrioCell><TrioCell $w={60} $a="center">Initial Value</TrioCell><TrioCell $w={66} $a="right">PNL%</TrioCell></Trio>
      <Trio $bold><TrioCell $w={66}>$0.00</TrioCell><TrioCell $w={60} $a="center">$0.00</TrioCell><TrioCell $w={66} $a="right">0</TrioCell></Trio>
    </Position>
    <Trade $plum>
      <SideSwitch><Half $on>Buy</Half><Half>Sell</Half></SideSwitch>
      <Form>
        <Radios><Radio $on />Market Order<Radio $ml={5} />Limit Order</Radios>
        <Track>{[0, 1, 2, 3, 4].map((i) => <Stop key={i} $on={i === 0} />)}</Track>
        <Ticks>{["0%", "25%", "50%", "75%", "100%"].map((t, i) => <Tick key={t} $on={i === 0}>{t}</Tick>)}</Ticks>
        <Field>Amount<Unit>ETH</Unit></Field>
        <Field>Estimated to Swap<Unit>PEPU</Unit></Field>
        <Field>Amount<Unit>USDT</Unit></Field>
        <Between $h={14}><Unit>Available</Unit>≈$0.00</Between>
        <BuyButton>Buy</BuyButton>
        <Between $h={30} $mt={9}><Inline $gap={5}><FaCog size={11} />Advanced Settings</Inline><Caret $up /></Between>
        <Between $h={10} $c="#fff"><Inline $gap={5}><Toggle><Knob /></Toggle><Bold $s={8.5}>Anti-MEV</Bold><FaInfoCircle size={9} color="#6a4a80" /></Inline></Between>
        <Between $h={28} $c="#fff"><Inline $gap={3}><Bold $s={8.5}>Slippage</Bold><FaInfoCircle size={9} color="#6a4a80" /></Inline><Inline $gap={3}><Unit>Auto</Unit><Box $mr={2} /></Inline></Between>
        <Quad $mt={3}>{["3%", "5%", "10%", "15%"].map((t) => <Slip key={t}>{t}</Slip>)}</Quad>
        <SlipInput>0</SlipInput>
        <Bold $s={8.5}>gas fee</Bold>
        <SmallNote>Ethereum</SmallNote>
        <Network />
      </Form>
    </Trade>
  </Right>
);

export default function App() {
  return (
    <Stage>
      <Global />
      <Glow />
      <Ghost $x={243} $y={4} $h={144} $scale={0.836} $fade="rgba(0,0,0,.37), rgba(0,0,0,.34) 45%, rgba(0,0,0,.2)">
        <Header />
        <Summary />
      </Ghost>
      <Ghost $x={179} $y={64} $h={66} $scale={0.911} $fade="rgba(0,0,0,.86), rgba(0,0,0,.78) 45%, rgba(0,0,0,.58)">
        <Header />
        <TokenBar />
      </Ghost>
      <Rim>
        <Window>
          <Header />
          <Summary />
          <Body>
            <Sidebar />
            <Market />
            <Ticket />
          </Body>
        </Window>
      </Rim>
    </Stage>
  );
}
